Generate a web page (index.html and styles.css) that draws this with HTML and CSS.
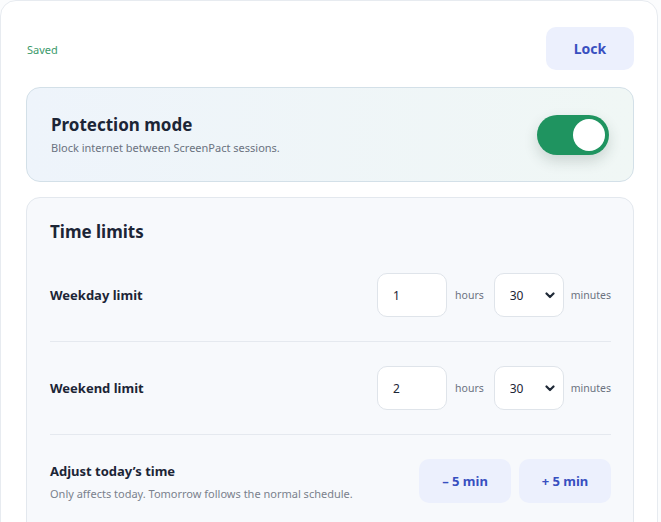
FILE: index.html
```html
<!DOCTYPE html>
<html lang="en">
<head>
    <meta charset="utf-8">
    <title>ScreenPact settings</title>
    <link rel="stylesheet" href="styles.css">
</head>
<body>
<div class="panel">
    <div class="topbar">
        <span class="status">Saved</span>
        <button type="button" class="btn btn-soft lock">Lock</button>
    </div>

    <div class="card protect">
        <div class="protect-text">
            <h2>Protection mode</h2>
            <p>Block internet between ScreenPact sessions.</p>
        </div>
        <button type="button" class="toggle on" aria-pressed="true"><span class="knob"></span></button>
    </div>

    <div class="card limits">
        <h2>Time limits</h2>

        <div class="row">
            <label class="row-label" for="weekdayHours">Weekday limit</label>
            <div class="fields">
                <input type="text" id="weekdayHours" class="field" value="1">
                <span class="unit">hours</span>
                <span class="select-wrap">
                    <select class="field">
                        <option>0</option>
                        <option>15</option>
                        <option selected>30</option>
                        <option>45</option>
                    </select>
                    <svg class="chev" width="10" height="7" viewBox="0 0 10 7"><path d="M1.5 1.5 5 5l3.5-3.5" fill="none" stroke="#1f2937" stroke-width="2.2" stroke-linecap="round" stroke-linejoin="round"/></svg>
                </span>
                <span class="unit min">minutes</span>
            </div>
        </div>

        <div class="row">
            <label class="row-label" for="weekendHours">Weekend limit</label>
            <div class="fields">
                <input type="text" id="weekendHours" class="field" value="2">
                <span class="unit">hours</span>
                <span class="select-wrap">
                    <select class="field">
                        <option>0</option>
                        <option>15</option>
                        <option selected>30</option>
                        <option>45</option>
                    </select>
                    <svg class="chev" width="10" height="7" viewBox="0 0 10 7"><path d="M1.5 1.5 5 5l3.5-3.5" fill="none" stroke="#1f2937" stroke-width="2.2" stroke-linecap="round" stroke-linejoin="round"/></svg>
                </span>
                <span class="unit min">minutes</span>
            </div>
        </div>

        <div class="row">
            <div>
                <div class="row-label">Adjust today’s time</div>
                <p class="hint">Only affects today. Tomorrow follows the normal schedule.</p>
            </div>
            <div class="adjust">
                <button type="button" class="btn btn-soft">– 5 min</button>
                <button type="button" class="btn btn-soft">+ 5 min</button>
            </div>
        </div>
    </div>
</div>
</body>
</html>
```

FILE: styles.css
```css
* {
    box-sizing: border-box;
}

body {
    margin: 0;
    background: #fbfcfd;
    font-family: "Noto Sans", "Open Sans", sans-serif;
    color: #1c2536;
}

h2, p {
    margin: 0;
}

.panel {
    width: 658px;
    min-height: 540px;
    padding: 26px 23px 0 25px;
    background: #fff;
    border: 1px solid #e7ebf0;
    border-radius: 16px;
    display: flex;
    flex-direction: column;
    gap: 15px;
}

.topbar {
    display: flex;
    justify-content: space-between;
    align-items: center;
    margin-bottom: 2px;
}

.status {
    font-size: 11px;
    color: #3b9a6b;
    margin-left: 1px;
    margin-top: 1px;
}

.btn {
    font-family: inherit;
    border: 0;
    cursor: pointer;
}

.btn-soft {
    background: #ecf0fd;
    color: #384fc0;
    font-weight: 700;
    font-size: 13px;
    border-radius: 10px;
}

.lock {
    width: 88px;
    height: 43px;
    font-size: 14px;
}

.card {
    border-radius: 14px;
    border: 1px solid #dde5ec;
}

.protect {
    height: 95px;
    padding: 0 24px 0 24px;
    display: flex;
    align-items: center;
    justify-content: space-between;
    background: linear-gradient(90deg, #eef4fb 0%, #f0f7f5 100%);
    border-color: #d3e0e8;
}

.protect h2 {
    font-size: 17px;
    font-weight: 700;
    line-height: 22px;
}

.protect p {
    font-size: 11px;
    color: #6b7280;
    margin-top: 4px;
}

.toggle {
    width: 72px;
    height: 40px;
    border: 0;
    padding: 0;
    border-radius: 20px;
    background: #1f9460;
    box-shadow: 0 6px 14px rgba(31, 60, 50, 0.18);
    position: relative;
    cursor: pointer;
}

.toggle .knob {
    position: absolute;
    top: 4px;
    right: 4px;
    width: 32px;
    height: 32px;
    border-radius: 50%;
    background: #fff;
}

.limits {
    background: #f7f9fc;
    border-color: #e3e8ee;
    padding: 22px 22px 0 23px;
    flex: 1;
}

.limits h2 {
    font-size: 17px;
    font-weight: 700;
    line-height: 24px;
    margin-bottom: 5px;
}

.row {
    display: flex;
    justify-content: space-between;
    align-items: center;
    padding: 24px 0;
    border-bottom: 1px solid #e5e9ef;
}

.row:last-child {
    border-bottom: 0;
}

.row-label {
    font-size: 13px;
    font-weight: 700;
    color: #1c2536;
}

.hint {
    font-size: 11px;
    color: #7a818c;
    margin-top: 6px;
}

.fields {
    display: flex;
    align-items: center;
    gap: 8px;
}

.fields .unit + .select-wrap {
    margin-left: 2px;
}

.fields .min {
    margin-left: -1px;
}

.field {
    width: 70px;
    height: 44px;
    border: 1px solid #dfe4ea;
    border-radius: 10px;
    background: #fff;
    font-family: inherit;
    font-size: 12px;
    color: #1c2536;
    padding: 0 15px;
    outline: none;
}

.select-wrap {
    position: relative;
    display: inline-flex;
}

.select-wrap select {
    appearance: none;
    -webkit-appearance: none;
}

.chev {
    position: absolute;
    right: 9px;
    top: 19px;
    pointer-events: none;
}

.unit {
    font-size: 10.5px;
    color: #6b7280;
}

.adjust {
    display: flex;
    gap: 8px;
}

.adjust .btn {
    width: 92px;
    height: 44px;
}
```
